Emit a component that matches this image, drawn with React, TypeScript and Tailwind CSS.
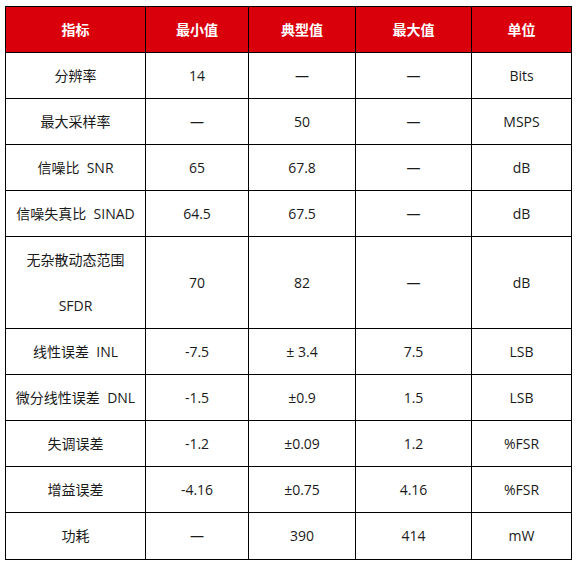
const header = ["指标", "最小值", "典型值", "最大值", "单位"];

const rows: { cells: string[]; tall?: boolean; last?: boolean }[] = [
  { cells: ["分辨率", "14", "—", "—", "Bits"] },
  { cells: ["最大采样率", "—", "50", "—", "MSPS"] },
  { cells: ["信噪比  SNR", "65", "67.8", "—", "dB"] },
  { cells: ["信噪失真比  SINAD", "64.5", "67.5", "—", "dB"] },
  { cells: ["无杂散动态范围\nSFDR", "70", "82", "—", "dB"], tall: true },
  { cells: ["线性误差  INL", "-7.5", "± 3.4", "7.5", "LSB"] },
  { cells: ["微分线性误差  DNL", "-1.5", "±0.9", "1.5", "LSB"] },
  { cells: ["失调误差", "-1.2", "±0.09", "1.2", "%FSR"] },
  { cells: ["增益误差", "-4.16", "±0.75", "4.16", "%FSR"] },
  { cells: ["功耗", "—", "390", "414", "mW"], last: true },
];

export default function App() {
  return (
    <div
      className="w-[576px] h-[565px] bg-white pl-[5px] pt-[6px]"
      style={{ fontFamily: '"Open Sans", "Noto Sans CJK SC", sans-serif' }}
    >
      <div className="grid w-[567px] grid-cols-[140px_103px_107px_116px_100px] border-l border-t border-black text-[14px] text-[#1a1a1a]">
        {header.map((h) => (
          <div
            key={h}
            className="flex h-[46px] items-center justify-center border-b border-r border-black bg-[#d9000b] font-bold text-white"
          >
            {h}
          </div>
        ))}
        {rows.map((r) =>
          r.cells.map((c, i) => (
            <div
              key={r.cells[0] + i}
              className={`flex flex-col items-center justify-center whitespace-pre border-b border-r border-black ${
                r.tall ? "h-[92px]" : r.last ? "h-[47px]" : "h-[46px]"
              }`}
            >
              {c.split("\n").map((line) => (
                <span key={line} className="leading-[46px]">
                  {line}
                </span>
              ))}
            </div>
          ))
        )}
      </div>
    </div>
  );
}
